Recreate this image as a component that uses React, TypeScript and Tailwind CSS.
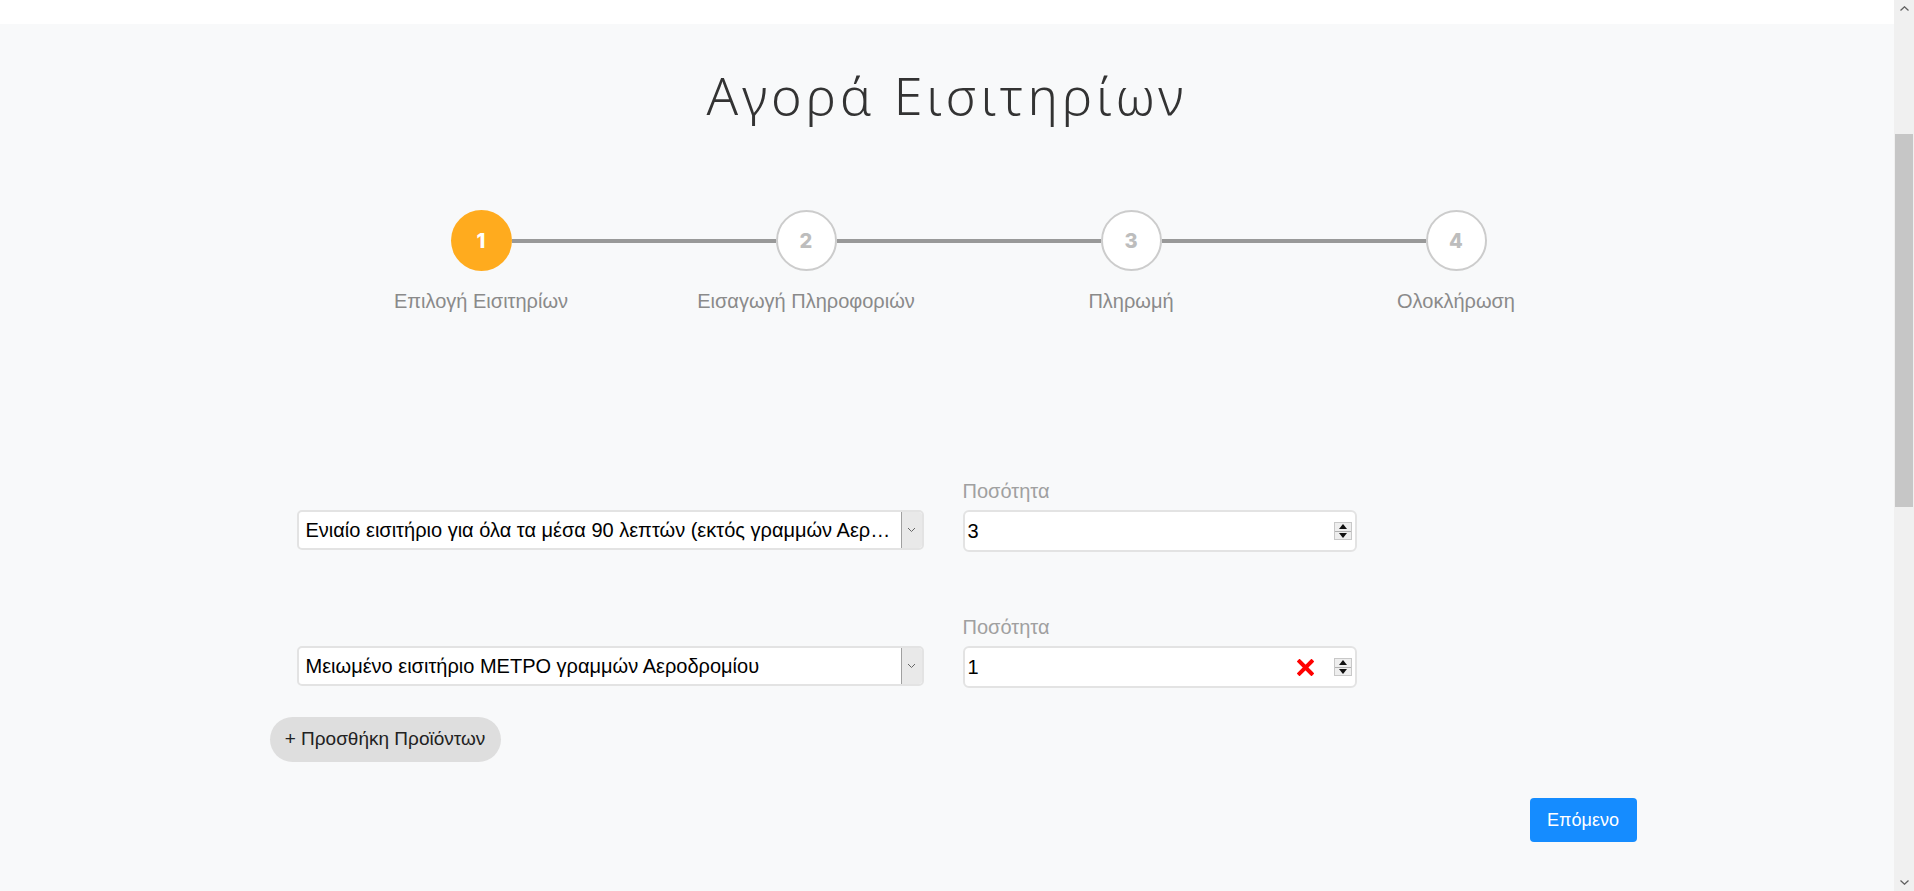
import { useState } from "react"

const steps = ["Επιλογή Εισιτηρίων", "Εισαγωγή Πληροφοριών", "Πληρωμή", "Ολοκλήρωση"]

const tickets = [
  "Ενιαίο εισιτήριο για όλα τα μέσα 90 λεπτών (εκτός γραμμών Αεροδρομίου)",
  "Μειωμένο εισιτήριο ΜΕΤΡΟ γραμμών Αεροδρομίου",
]

function Spinner() {
  return (
    <div className="flex flex-col w-[18px] h-[18px] border border-[#c8c8c8] bg-[#eeeeee]">
      <div className="flex-1 flex items-center justify-center border-b border-[#b0b0b0]">
        <svg width="8" height="5" viewBox="0 0 8 5">
          <path d="M0 5 L4 0 L8 5 Z" fill="#111" />
        </svg>
      </div>
      <div className="flex-1 flex items-center justify-center">
        <svg width="8" height="5" viewBox="0 0 8 5">
          <path d="M0 0 L8 0 L4 5 Z" fill="#111" />
        </svg>
      </div>
    </div>
  )
}

function TicketSelect({ label }: { label: string }) {
  return (
    <div className="w-[627px] h-[40px] mb-[2px] flex bg-white border-2 border-[#e3e3e3] rounded-[5px] overflow-hidden">
      <div className="flex-1 min-w-0 pl-[7px] pr-[5px] flex items-center text-[20px] text-black">
        <span className="truncate">{label}</span>
      </div>
      <div className="w-[21px] bg-[#e9e9e9] border-l border-[#a0a0a0] flex items-center justify-center">
        <svg width="9" height="6" viewBox="0 0 9 6">
          <path d="M1 1 L4.5 4.5 L8 1" stroke="#666" strokeWidth="1" fill="none" />
        </svg>
      </div>
    </div>
  )
}

function QuantityInput({ value, invalid }: { value: string; invalid?: boolean }) {
  return (
    <div className="w-[394px]">
      <div className="h-[23px] leading-[23px] text-[20px] text-[#a0a0a0] mb-[7px]">Ποσότητα</div>
      <div className="h-[42px] bg-white border-2 border-[#e3e3e3] rounded-[6px] flex items-center pl-[3px] pr-[3px]">
        <span className="flex-1 text-[20px] text-black">{value}</span>
        {invalid && (
          <svg width="17" height="17" viewBox="0 0 17 17" className="mr-[20px]">
            <path d="M2.5 2.5 L14.5 14.5 M14.5 2.5 L2.5 14.5" stroke="#ff0000" strokeWidth="4" strokeLinecap="square" />
          </svg>
        )}
        <Spinner />
      </div>
    </div>
  )
}

// window scrollbar as it appears in the screenshot
function ScrollBar() {
  return (
    <div className="w-[20px] h-screen shrink-0 bg-[#f0f0f0] flex flex-col items-stretch">
      <div className="h-[17px] flex items-center justify-center">
        <svg width="9" height="5" viewBox="0 0 9 5">
          <path d="M0.5 4.5 L4.5 0.8 L8.5 4.5" stroke="#606060" strokeWidth="1.3" fill="none" />
        </svg>
      </div>
      <div className="h-[117px]" />
      <div className="h-[373px] mx-[1px] bg-[#c6c6c6]" />
      <div className="flex-1" />
      <div className="h-[17px] flex items-center justify-center">
        <svg width="9" height="5" viewBox="0 0 9 5">
          <path d="M0.5 0.5 L4.5 4.2 L8.5 0.5" stroke="#606060" strokeWidth="1.3" fill="none" />
        </svg>
      </div>
    </div>
  )
}

export default function App() {
  const [current] = useState(0)

  return (
    <div className="flex h-screen overflow-hidden bg-[#f8f9fa] font-['Liberation_Sans',Arial,sans-serif]">
      <div className="flex-1 min-w-0">
        <div className="h-[24px] bg-white" />

        <h1 className="mt-[45px] text-center text-[52px] leading-none font-light tracking-[0.08em] text-[#333333] font-['Noto_Sans',sans-serif]">
          Αγορά Εισιτηρίων
        </h1>

        <div className="mx-auto w-[1377px] translate-x-[1px]">
          {/* stepper */}
          <div className="ml-[59px] w-[1300px] mt-[89px]">
            <div className="flex items-center px-[132px]">
              {steps.map((s, i) => (
                <div key={s} className={i < steps.length - 1 ? "flex items-center flex-1" : "flex items-center"}>
                  <div
                    className={
                      i === current
                        ? "w-[61px] h-[61px] rounded-full bg-[#ffab1e] flex items-center justify-center text-white text-[20px] font-extrabold font-['Inter',sans-serif]"
                        : "w-[61px] h-[61px] rounded-full bg-white border-2 border-[#cccccc] flex items-center justify-center text-[#bdbdbd] text-[20px] font-extrabold font-['Inter',sans-serif]"
                    }
                  >
                    {i + 1}
                  </div>
                  {i < steps.length - 1 && <div className="flex-1 h-[4px] bg-[#999999]" />}
                </div>
              ))}
            </div>
            <div className="grid grid-cols-4 mt-[19px]">
              {steps.map((s) => (
                <div key={s} className="text-center text-[20px] leading-[23px] text-[#8a8a8a]">
                  {s}
                </div>
              ))}
            </div>
          </div>

          {/* ticket rows */}
          <div className="mt-[167px] flex items-end gap-[39px] pl-[37px]">
            <TicketSelect label={tickets[0]} />
            <QuantityInput value="3" />
          </div>
          <div className="mt-[64px] flex items-end gap-[39px] pl-[37px]">
            <TicketSelect label={tickets[1]} />
            <QuantityInput value="1" invalid />
          </div>

          <button className="mt-[29px] ml-[10px] h-[45px] w-[231px] rounded-full bg-[#dedede] text-[19px] text-[#222222]">
            + Προσθήκη Προϊόντων
          </button>

          <div className="mt-[36px] flex justify-end">
            <button className="h-[44px] w-[107px] rounded-[4px] bg-[#158cff] text-white text-[18px]">
              Επόμενο
            </button>
          </div>
        </div>
      </div>
      <ScrollBar />
    </div>
  )
}
